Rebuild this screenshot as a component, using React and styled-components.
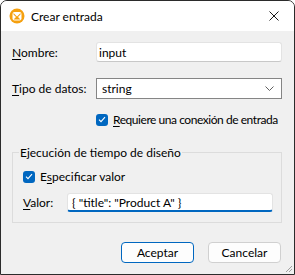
import React from 'react';
import styled, { createGlobalStyle } from 'styled-components';

const GlobalStyle = createGlobalStyle`
  html, body {
    margin: 0;
    padding: 0;
    background: #ffffff;
  }
  body {
    font-family: "Segoe UI", Lato, "Liberation Sans", sans-serif;
    font-size: 12px;
    line-height: 15px;
    color: #000;
  }
`;

const Window = styled.div`
  width: 295px;
  height: 275px;
  box-sizing: border-box;
  border: 1px solid #2b2b2b;
  border-radius: 7px 7px 0 0;
  background: #f0f0f0;
  display: flex;
  flex-direction: column;
  overflow: hidden;
  position: relative;
`;

const TitleBar = styled.div`
  height: 30px;
  background: #ffffff;
  display: flex;
  align-items: center;
  padding: 0 0 0 8px;
  flex-shrink: 0;
`;

const TitleText = styled.span`
  margin-left: 6px;
  flex: 1;
`;

const CloseButton = styled.div`
  width: 40px;
  height: 30px;
  display: flex;
  align-items: center;
  justify-content: center;
`;

const Body = styled.div`
  flex: 1;
  padding: 11px 12px 0 11px;
  display: flex;
  flex-direction: column;
`;

const FieldRow = styled.div`
  display: grid;
  grid-template-columns: ${({ $label }) => $label}px 1fr;
  align-items: center;
  margin-top: ${({ $top }) => $top || 0}px;
`;

const Label = styled.label`
  white-space: nowrap;
`;

const Key = styled.span`
  text-decoration: underline;
  text-underline-offset: 2px;
`;

const TextBox = styled.div`
  height: ${({ $h }) => $h || 20}px;
  box-sizing: border-box;
  background: #ffffff;
  border: 1px solid #e3e3e3;
  border-bottom: ${({ $focused }) => ($focused ? '2px solid #0067c0' : '1px solid #c8c8c8')};
  border-radius: 3px;
  padding: 0 6px 0 ${({ $pad }) => $pad}px;
  display: flex;
  align-items: center;
  white-space: nowrap;
`;

const SelectBox = styled.div`
  height: 21px;
  box-sizing: border-box;
  background: #ffffff;
  border: 1px solid #858585;
  padding: 0 7px 0 5px;
  display: flex;
  align-items: center;
  justify-content: space-between;
`;

const CheckRow = styled.div`
  display: flex;
  align-items: center;
  gap: 5px;
  white-space: nowrap;
  letter-spacing: ${({ $tight }) => ($tight ? '-0.45px' : 'normal')};
  margin-top: ${({ $top }) => $top || 0}px;
  padding-left: ${({ $indent }) => $indent || 0}px;
`;

const Box = styled.span`
  width: 12px;
  height: 12px;
  flex-shrink: 0;
  border-radius: 3px;
  background: #0067c0;
  display: inline-flex;
  align-items: center;
  justify-content: center;
`;

const Group = styled.fieldset`
  margin: 18px 0 0 0;
  padding: 9px 8px 10px 10px;
  border: 1px solid #dcdcdc;
  border-radius: 0;
`;

const Legend = styled.legend`
  padding: 0 1px;
  margin-left: -4px;
`;

const ButtonRow = styled.div`
  display: flex;
  justify-content: flex-end;
  gap: 14px;
  margin-top: 19px;
  padding-right: 1px;
`;

const Button = styled.div`
  width: 73px;
  height: 21px;
  box-sizing: border-box;
  border-radius: 4px;
  background: #fdfdfd;
  border: 1px solid ${({ $primary }) => ($primary ? '#0067c0' : '#d0d0d0')};
  display: flex;
  align-items: center;
  justify-content: center;
`;

const Grip = styled.svg`
  position: absolute;
  right: 1px;
  bottom: 1px;
`;

const Check = () => (
  <Box>
    <svg width="8" height="7" viewBox="0 0 8 7">
      <path d="M1 3.6 L3 5.6 L7 1.2" fill="none" stroke="#ffffff" strokeWidth="1.1" />
    </svg>
  </Box>
);

const AppIcon = () => (
  <svg width="16" height="16" viewBox="0 0 16 16">
    <circle cx="8" cy="8" r="7.5" fill="#f5a00f" />
    <rect x="3.5" y="4" width="9" height="8.5" rx="2" fill="#ffffff" />
    <path d="M4.5 5 L8 8.6 L11.5 5 L11.5 6.6 L9 9 L11.5 11.5 L4.5 11.5 L7 9 L4.5 6.6 Z" fill="#f5a00f" />
  </svg>
);

export default function App() {
  return (
    <>
      <GlobalStyle />
      <Window>
        <TitleBar>
          <AppIcon />
          <TitleText>Crear entrada</TitleText>
          <CloseButton>
            <svg width="10" height="10" viewBox="0 0 10 10">
              <path d="M0.5 0.5 L9.5 9.5 M9.5 0.5 L0.5 9.5" stroke="#1a1a1a" strokeWidth="1" />
            </svg>
          </CloseButton>
        </TitleBar>
        <Body>
          <FieldRow $label={84}>
            <Label><Key>N</Key>ombre:</Label>
            <TextBox $pad={2}>input</TextBox>
          </FieldRow>
          <FieldRow $label={84} $top={16}>
            <Label><Key>T</Key>ipo de datos:</Label>
            <SelectBox>
              <span>string</span>
              <svg width="9" height="5" viewBox="0 0 9 5">
                <path d="M0.5 0.5 L4.5 4.5 L8.5 0.5" fill="none" stroke="#606060" strokeWidth="1" />
              </svg>
            </SelectBox>
          </FieldRow>
          <CheckRow $indent={84} $top={13} $tight>
            <Check />
            <span><Key>R</Key>equiere una conexión de entrada</span>
          </CheckRow>
          <Group>
            <Legend>Ejecución de tiempo de diseño</Legend>
            <CheckRow>
              <Check />
              <span>E<Key>s</Key>pecificar valor</span>
            </CheckRow>
            <FieldRow $label={44} $top={9}>
              <Label><Key>V</Key>alor:</Label>
              <TextBox $focused $h={19} $pad={4}>{'{ "title": "Product A" }'}</TextBox>
            </FieldRow>
          </Group>
          <ButtonRow>
            <Button $primary>Aceptar</Button>
            <Button>Cancelar</Button>
          </ButtonRow>
        </Body>
        <Grip width="10" height="10" viewBox="0 0 10 10">
          <path d="M9 3 L3 9 M9 6 L6 9" stroke="#a0a0a0" strokeWidth="1" />
        </Grip>
      </Window>
    </>
  );
}
